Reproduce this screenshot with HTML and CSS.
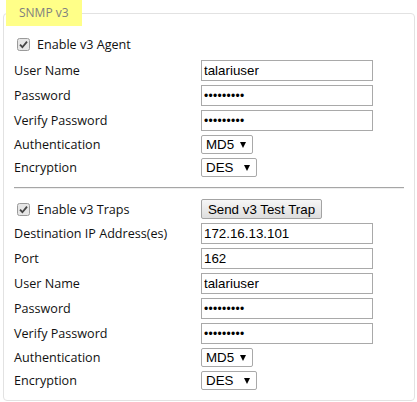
FILE: index.html
```html
<!DOCTYPE html>
<html>
<head>
<meta charset="utf-8">
<link rel="stylesheet" href="styles.css">
</head>
<body>
<fieldset class="box">
  <legend class="legend">SNMP v3</legend>
  <div class="inner">
    <div class="grid">
      <label class="check span2">
        <span class="cb"><svg width="13" height="13" viewBox="0 0 13 13"><rect x="0.5" y="0.5" width="12" height="12" rx="2" fill="#e6e6e6" stroke="#9a9a9a"/><path d="M3 6.6 L5.4 9.2 L10 3.6" fill="none" stroke="#444" stroke-width="1.8"/></svg></span>
        <span>Enable v3 Agent</span>
      </label>
      <span class="lbl">User Name</span>
      <input class="txt" type="text" value="talariuser">
      <span class="lbl">Password</span>
      <input class="txt pw" type="password" value="talariuse">
      <span class="lbl">Verify Password</span>
      <input class="txt pw" type="password" value="talariuse">
      <span class="lbl">Authentication</span>
      <span class="sel sel-md5"><select><option>MD5</option></select></span>
      <span class="lbl">Encryption</span>
      <span class="sel sel-des"><select><option>DES</option></select></span>
    </div>
    <hr class="sep">
    <div class="grid">
      <label class="check">
        <span class="cb"><svg width="13" height="13" viewBox="0 0 13 13"><rect x="0.5" y="0.5" width="12" height="12" rx="2" fill="#e6e6e6" stroke="#9a9a9a"/><path d="M3 6.6 L5.4 9.2 L10 3.6" fill="none" stroke="#444" stroke-width="1.8"/></svg></span>
        <span>Enable v3 Traps</span>
      </label>
      <span class="btncell"><button class="btn" type="button">Send v3 Test Trap</button></span>
      <span class="lbl">Destination IP Address(es)</span>
      <input class="txt" type="text" value="172.16.13.101">
      <span class="lbl">Port</span>
      <input class="txt" type="text" value="162">
      <span class="lbl">User Name</span>
      <input class="txt" type="text" value="talariuser">
      <span class="lbl">Password</span>
      <input class="txt pw" type="password" value="talariuse">
      <span class="lbl">Verify Password</span>
      <input class="txt pw" type="password" value="talariuse">
      <span class="lbl">Authentication</span>
      <span class="sel sel-md5"><select><option>MD5</option></select></span>
      <span class="lbl">Encryption</span>
      <span class="sel sel-des"><select><option>DES</option></select></span>
    </div>
  </div>
</fieldset>
</body>
</html>
```
FILE: styles.css
```css
html, body {
  margin: 0;
  padding: 0;
  background: #fff;
}
body {
  font-family: "Open Sans", "DejaVu Sans", sans-serif;
  font-size: 12.6px;
  color: #111;
}
.box {
  margin: 0 2px 0 3px;
  padding: 0;
  border: 1px solid #e2e2e2;
  border-radius: 4px;
  min-width: 0;
}
.legend {
  margin-left: 2px;
  padding: 0 13px;
  height: 26px;
  line-height: 26px;
  background: #ffff88;
  color: #808080;
  font-size: 12px;
  box-sizing: border-box;
}
.inner {
  padding: 8px 10px 10px 10px;
}
.grid {
  display: grid;
  grid-template-columns: 187px 172px;
  row-gap: 4px;
  align-items: center;
}
.span2 {
  grid-column: 1 / span 2;
  margin-bottom: 2px;
}
.check {
  display: flex;
  align-items: center;
  height: 20px;
  gap: 7px;
  padding-left: 3px;
}
.cb {
  display: inline-flex;
  width: 13px;
  height: 13px;
}
.lbl {
  line-height: 19px;
}
.txt {
  box-sizing: border-box;
  width: 172px;
  height: 21px;
  margin: 0;
  padding: 0 2px;
  border: 1px solid #a9a9a9;
  font-family: "Liberation Sans", Arial, sans-serif;
  font-size: 13.333px;
  color: #000;
  background: #fff;
  outline: none;
}
.pw {
  font-size: 12px;
  letter-spacing: 0.3px;
}
.sel {
  position: relative;
  display: flex;
  justify-self: start;
  height: 19px;
}
.sel select {
  -webkit-appearance: none;
  appearance: none;
  display: block;
  box-sizing: border-box;
  height: 19px;
  margin: 0;
  padding: 0 0 0 4px;
  border: 1px solid #a9a9a9;
  border-radius: 2px;
  background: #fff;
  font-family: "Liberation Sans", Arial, sans-serif;
  font-size: 13.333px;
  color: #000;
  line-height: 17px;
}
.sel-md5 select { width: 52px; }
.sel-des select { width: 56px; }
.sel::after {
  content: "";
  position: absolute;
  top: 7px;
  right: 7px;
  border-left: 3.5px solid transparent;
  border-right: 3.5px solid transparent;
  border-top: 6px solid #000;
  pointer-events: none;
}
.sep {
  margin: 10px 0;
  border: 0;
  border-top: 1px solid #a6a6a6;
  border-bottom: 1px solid #eeeeee;
  height: 0;
}
.btncell {
  display: flex;
}
.btn {
  box-sizing: border-box;
  height: 20px;
  width: 121px;
  margin: 0;
  padding: 0;
  border: 1px solid #a3a3a3;
  border-radius: 2px;
  background: linear-gradient(#f6f6f6, #dedede);
  font-family: "Liberation Sans", Arial, sans-serif;
  font-size: 13.333px;
  color: #000;
  display: block;
}
```
